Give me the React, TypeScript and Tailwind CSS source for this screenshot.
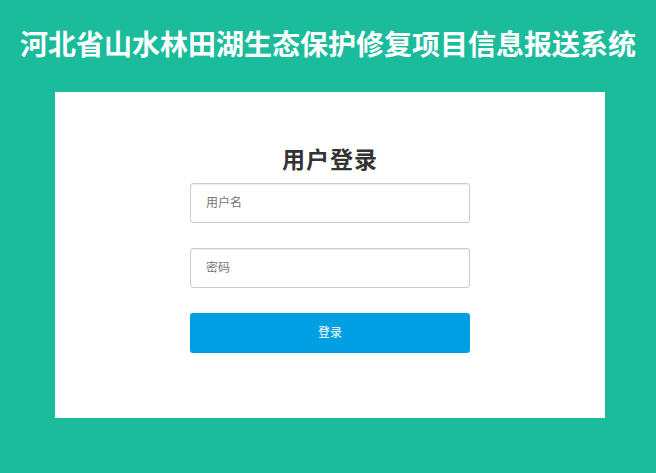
import React, { useState } from "react"

export default function App() {
    const [username, setUsername] = useState("")
    const [password, setPassword] = useState("")

    return (
        <div
            className="min-h-screen w-full bg-[#1bbc9b]"
            style={{ fontFamily: '"Liberation Sans", "Noto Sans CJK SC", sans-serif' }}
        >
            {/* Header */}
            <div className="h-[92px] flex items-center justify-center">
                <h1 className="text-[28px] leading-none font-bold text-white whitespace-nowrap">河北省山水林田湖生态保护修复项目信息报送系统</h1>
            </div>

            {/* Login card */}
            <div className="w-[550px] ml-[55px] bg-white pt-[52px] pb-[65px]">
                <h2 className="text-[23px] leading-[32px] font-bold text-[#333] text-center tracking-[1px]">用户登录</h2>
                <div className="w-[280px] mx-auto mt-[7px] flex flex-col">
                    <input
                        type="text"
                        value={username}
                        onChange={(e) => setUsername(e.target.value)}
                        placeholder="用户名"
                        className="h-[40px] w-full px-[15px] text-[12px] text-[#555] placeholder:text-[#757575] border border-[#ccc] rounded-[3px] shadow-[inset_0_1px_1px_rgba(0,0,0,0.075)] focus:outline-none"
                    />
                    <input
                        type="password"
                        value={password}
                        onChange={(e) => setPassword(e.target.value)}
                        placeholder="密码"
                        className="mt-[25px] h-[40px] w-full px-[15px] text-[12px] text-[#555] placeholder:text-[#757575] border border-[#ccc] rounded-[3px] shadow-[inset_0_1px_1px_rgba(0,0,0,0.075)] focus:outline-none"
                    />
                    <button className="mt-[25px] h-[40px] w-full bg-[#009fe3] text-white text-[12px] rounded-[3px]">
                        登录
                    </button>
                </div>
            </div>
        </div>
    )
}
